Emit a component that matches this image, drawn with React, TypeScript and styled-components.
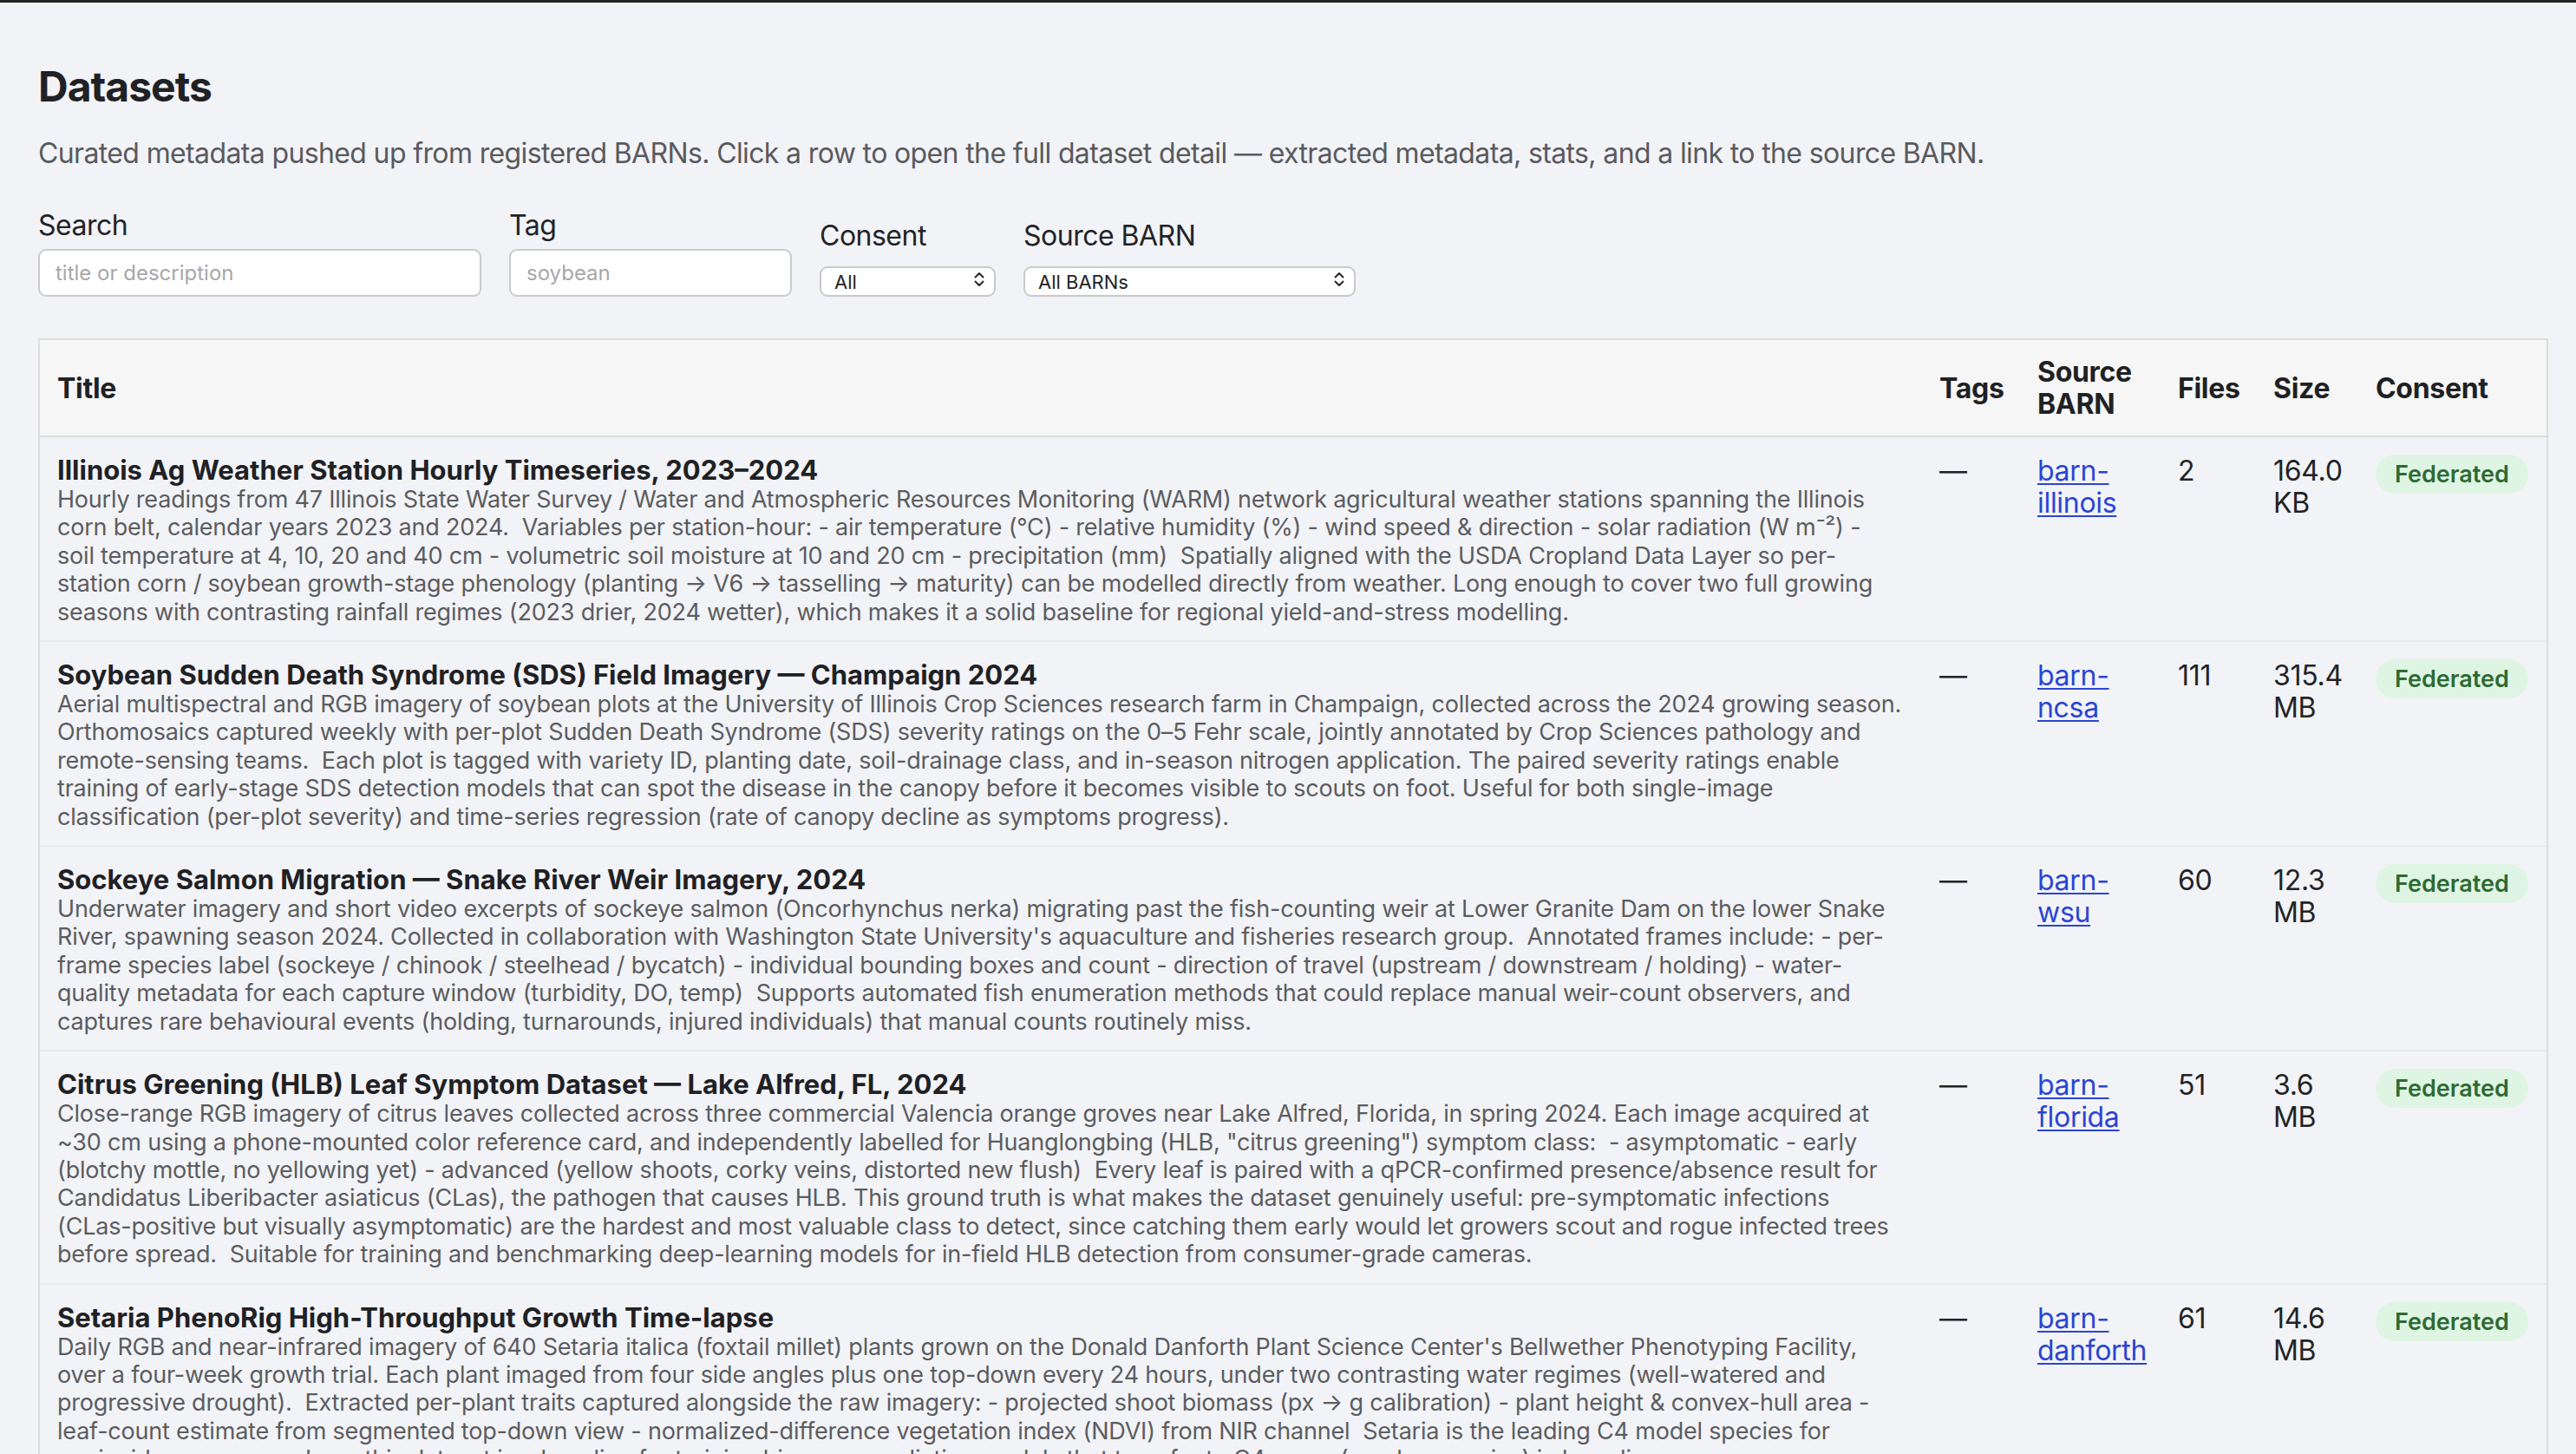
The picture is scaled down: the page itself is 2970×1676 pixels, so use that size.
import React from 'react';
import styled, { createGlobalStyle } from 'styled-components';

const GlobalStyle = createGlobalStyle`
  html, body {
    margin: 0;
    padding: 0;
    background: #f2f3f7;
  }
  body {
    font-family: Inter, "Liberation Sans", Arial, sans-serif;
    color: #222326;
  }
  * { box-sizing: border-box; }
`;

const TopBar = styled.div`
  height: 3px;
  background: #232323;
`;

const Page = styled.main`
  padding: 0 32px 40px 44px;
`;

const Heading = styled.h1`
  margin: 68px 0 0;
  font-size: 48px;
  line-height: 58px;
  font-weight: 700;
  color: #1f2124;
  letter-spacing: -1px;
`;

const Subtitle = styled.p`
  margin: 29px 0 0;
  font-size: 32px;
  line-height: 38px;
  color: #595a5e;
  letter-spacing: -0.63px;
`;

const Filters = styled.div`
  display: flex;
  align-items: flex-end;
  gap: 32px;
  margin-top: 45px;
`;

const Field = styled.label<{ $gap: number }>`
  display: flex;
  flex-direction: column;
  gap: ${(p) => p.$gap}px;
  font-size: 32px;
  line-height: 38px;
  color: #222326;
  letter-spacing: -0.5px;
`;

const TextInput = styled.input<{ $w: number }>`
  width: ${(p) => p.$w}px;
  height: 55px;
  padding: 0 18px;
  border: 2px solid #cbcbcd;
  border-radius: 9px;
  background: #ffffff;
  font-family: Inter, "Liberation Sans", Arial, sans-serif;
  font-size: 24px;
  letter-spacing: 0;
  color: #222326;
  outline: none;
  &::placeholder {
    color: #a7a7a9;
  }
`;

const SelectWrap = styled.div<{ $w: number }>`
  position: relative;
  width: ${(p) => p.$w}px;
`;

const Select = styled.select`
  appearance: none;
  -webkit-appearance: none;
  width: 100%;
  height: 35px;
  padding: 0 40px 0 15px;
  border: 2px solid #c9c9cb;
  border-radius: 9px;
  background: #ffffff;
  font-family: Inter, "Liberation Sans", Arial, sans-serif;
  font-size: 22px;
  letter-spacing: 0;
  color: #222326;
  outline: none;
`;

const Chevron = styled.svg`
  position: absolute;
  right: 12px;
  top: 50%;
  transform: translateY(-50%);
  pointer-events: none;
`;

const TableFrame = styled.div`
  margin-top: 48px;
  width: 2894px;
  border: 2px solid #dddddf;
`;

const Table = styled.table`
  width: 100%;
  border-collapse: collapse;
  table-layout: fixed;
`;

const HeadRow = styled.tr`
  background: #f6f6f6;
  border-bottom: 2px solid #dddddf;
`;

const Th = styled.th`
  padding: 18px 20px;
  text-align: left;
  vertical-align: middle;
  font-size: 32px;
  line-height: 37px;
  font-weight: 700;
  color: #1f2124;
  letter-spacing: -0.3px;
`;

const Row = styled.tr`
  border-bottom: 2px solid #e8e9ec;
`;

const Td = styled.td`
  padding: 20px 20px 16px;
  vertical-align: top;
  font-size: 32px;
  line-height: 37px;
  color: #222326;
  letter-spacing: -0.3px;
`;

const Title = styled.div`
  font-size: 31px;
  line-height: 36px;
  font-weight: 700;
  color: #1f2124;
  letter-spacing: 0;
`;

const Description = styled.div`
  font-size: 27px;
  line-height: 32.4px;
  color: #5b5c60;
  white-space: pre-wrap;
  letter-spacing: -0.2px;
`;

const BarnLink = styled.a`
  color: #2a45d3;
  text-decoration: underline;
  text-decoration-thickness: 2px;
  text-underline-offset: 3px;
`;

const Badge = styled.span`
  display: inline-block;
  padding: 8px 22px;
  border-radius: 999px;
  background: #dff5e3;
  color: #2d6a33;
  font-size: 27px;
  line-height: 29px;
  font-weight: 600;
  letter-spacing: 0;
`;

type Dataset = {
  title: string;
  description: string;
  barn: string;
  files: number;
  size: string;
};

const datasets: Dataset[] = [
  {
    title: 'Illinois Ag Weather Station Hourly Timeseries, 2023–2024',
    description:
      'Hourly readings from 47 Illinois State Water Survey / Water and Atmospheric Resources Monitoring (WARM) network agricultural weather stations spanning the Illinois corn belt, calendar years 2023 and 2024.  Variables per station-hour: - air temperature (°C) - relative humidity (%) - wind speed & direction - solar radiation (W m⁻²) -\nsoil temperature at 4, 10, 20 and 40 cm - volumetric soil moisture at 10 and 20 cm - precipitation (mm)  Spatially aligned with the USDA Cropland Data Layer so per-station corn / soybean growth-stage phenology (planting → V6 → tasselling → maturity) can be modelled directly from weather. Long enough to cover two full growing seasons with contrasting rainfall regimes (2023 drier, 2024 wetter), which makes it a solid baseline for regional yield-and-stress modelling.',
    barn: 'barn-illinois',
    files: 2,
    size: '164.0 KB',
  },
  {
    title: 'Soybean Sudden Death Syndrome (SDS) Field Imagery — Champaign 2024',
    description:
      'Aerial multispectral and RGB imagery of soybean plots at the University of Illinois Crop Sciences research farm in Champaign, collected across the 2024 growing season.  Orthomosaics captured weekly with per-plot Sudden Death Syndrome (SDS) severity ratings on the 0–5 Fehr scale, jointly annotated by Crop Sciences pathology and remote-sensing teams.  Each plot is tagged with variety ID, planting date, soil-drainage class, and in-season nitrogen application. The paired severity ratings enable training of early-stage SDS detection models that can spot the disease in the canopy before it becomes visible to scouts on foot. Useful for both single-image classification (per-plot severity) and time-series regression (rate of canopy decline as symptoms progress).',
    barn: 'barn-ncsa',
    files: 111,
    size: '315.4 MB',
  },
  {
    title: 'Sockeye Salmon Migration — Snake River Weir Imagery, 2024',
    description:
      "Underwater imagery and short video excerpts of sockeye salmon (Oncorhynchus nerka) migrating past the fish-counting weir at Lower Granite Dam on the lower Snake River, spawning season 2024. Collected in collaboration with Washington State University's aquaculture and fisheries research group.  Annotated frames include: - per-frame species label (sockeye / chinook / steelhead / bycatch) - individual bounding boxes and count - direction of travel (upstream / downstream / holding) - water-quality metadata for each capture window (turbidity, DO, temp)  Supports automated fish enumeration methods that could replace manual weir-count observers, and captures rare behavioural events (holding, turnarounds, injured individuals) that manual counts routinely miss.",
    barn: 'barn-wsu',
    files: 60,
    size: '12.3 MB',
  },
  {
    title: 'Citrus Greening (HLB) Leaf Symptom Dataset — Lake Alfred, FL, 2024',
    description:
      'Close-range RGB imagery of citrus leaves collected across three commercial Valencia orange groves near Lake Alfred, Florida, in spring 2024. Each image acquired at ~30 cm using a phone-mounted color reference card, and independently labelled for Huanglongbing (HLB, "citrus greening") symptom class:  - asymptomatic - early (blotchy mottle, no yellowing yet) - advanced (yellow shoots, corky veins, distorted new flush)  Every leaf is paired with a qPCR-confirmed presence/absence result for Candidatus Liberibacter asiaticus (CLas), the pathogen that causes HLB. This ground truth is what makes the dataset genuinely useful: pre-symptomatic infections (CLas-positive but visually asymptomatic) are the hardest and most valuable class to detect, since catching them early would let growers scout and rogue infected trees before spread.  Suitable for training and benchmarking deep-learning models for in-field HLB detection from consumer-grade cameras.',
    barn: 'barn-florida',
    files: 51,
    size: '3.6 MB',
  },
  {
    title: 'Setaria PhenoRig High-Throughput Growth Time-lapse',
    description:
      "Daily RGB and near-infrared imagery of 640 Setaria italica (foxtail millet) plants grown on the Donald Danforth Plant Science Center's Bellwether Phenotyping Facility, over a four-week growth trial. Each plant imaged from four side angles plus one top-down every 24 hours, under two contrasting water regimes (well-watered and progressive drought).  Extracted per-plant traits captured alongside the raw imagery: - projected shoot biomass (px → g calibration) - plant height & convex-hull area - leaf-count estimate from segmented top-down view - normalized-difference vegetation index (NDVI) from NIR channel  Setaria is the leading C4 model species for panicoid grass research, so this dataset is a baseline for training biomass-prediction models that transfer to C4 crops (sorghum, maize) in breeding programs.",
    barn: 'barn-danforth',
    files: 61,
    size: '14.6 MB',
  },
];

const columns = [
  { label: 'Title', width: 2170 },
  { label: 'Tags', width: 113 },
  { label: 'Source BARN', width: 162 },
  { label: 'Files', width: 110 },
  { label: 'Size', width: 118 },
  { label: 'Consent', width: 217 },
];

const UpDown = () => (
  <Chevron width="14" height="20" viewBox="0 0 14 20" fill="none">
    <path d="M2.5 7.5 L7 3 L11.5 7.5" stroke="#2a2a2a" strokeWidth="2" strokeLinecap="round" strokeLinejoin="round" />
    <path d="M2.5 12.5 L7 17 L11.5 12.5" stroke="#2a2a2a" strokeWidth="2" strokeLinecap="round" strokeLinejoin="round" />
  </Chevron>
);

export default function App() {
  return (
    <>
      <GlobalStyle />
      <TopBar />
      <Page>
        <Heading>Datasets</Heading>
        <Subtitle>
          Curated metadata pushed up from registered BARNs. Click a row to open the full dataset detail — extracted
          metadata, stats, and a link to the source BARN.
        </Subtitle>
        <Filters>
          <Field $gap={8}>
            Search
            <TextInput $w={511} placeholder="title or description" />
          </Field>
          <Field $gap={8}>
            Tag
            <TextInput $w={326} placeholder="soybean" />
          </Field>
          <Field $gap={12}>
            Consent
            <SelectWrap $w={203}>
              <Select defaultValue="all">
                <option value="all">All</option>
                <option value="federated">Federated</option>
                <option value="private">Private</option>
              </Select>
              <UpDown />
            </SelectWrap>
          </Field>
          <Field $gap={12}>
            Source BARN
            <SelectWrap $w={383}>
              <Select defaultValue="all">
                <option value="all">All BARNs</option>
                {datasets.map((d) => (
                  <option key={d.barn} value={d.barn}>
                    {d.barn}
                  </option>
                ))}
              </Select>
              <UpDown />
            </SelectWrap>
          </Field>
        </Filters>
        <TableFrame>
          <Table>
            <colgroup>
              {columns.map((c) => (
                <col key={c.label} style={{ width: c.width }} />
              ))}
            </colgroup>
            <thead>
              <HeadRow>
                {columns.map((c) => (
                  <Th key={c.label}>{c.label}</Th>
                ))}
              </HeadRow>
            </thead>
            <tbody>
              {datasets.map((d) => (
                <Row key={d.title}>
                  <Td>
                    <Title>{d.title}</Title>
                    <Description>{d.description}</Description>
                  </Td>
                  <Td>—</Td>
                  <Td>
                    <BarnLink href="#">{d.barn}</BarnLink>
                  </Td>
                  <Td>{d.files}</Td>
                  <Td>{d.size}</Td>
                  <Td>
                    <Badge>Federated</Badge>
                  </Td>
                </Row>
              ))}
            </tbody>
          </Table>
        </TableFrame>
      </Page>
    </>
  );
}
